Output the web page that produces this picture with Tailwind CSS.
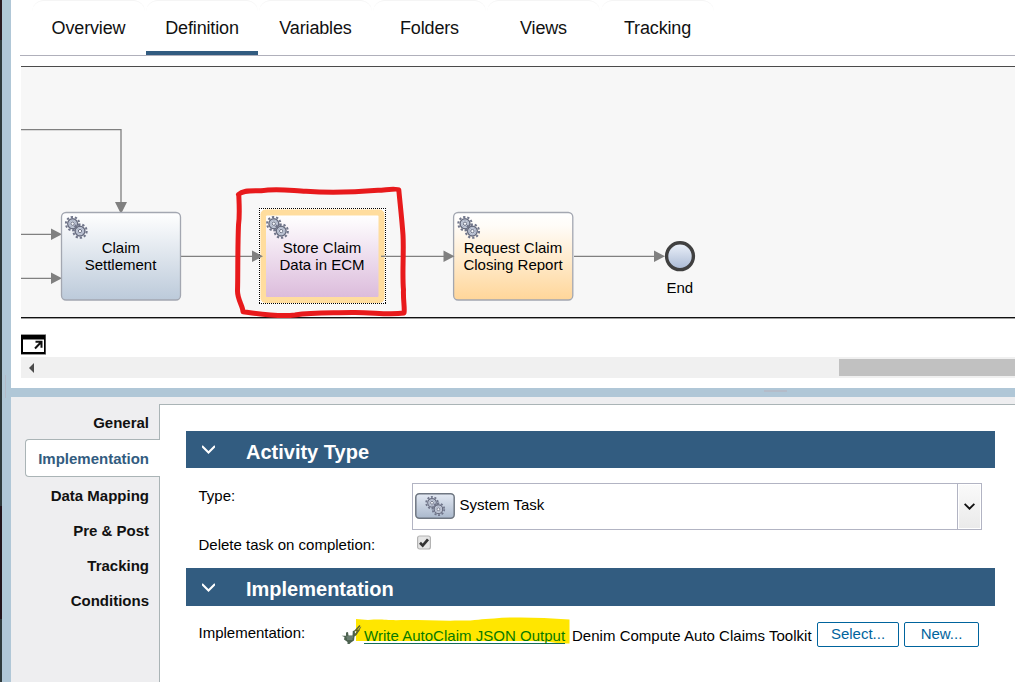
<!DOCTYPE html>
<html lang="en">
<head>
<meta charset="utf-8">
<title>Process Designer</title>
<script src="https://cdn.jsdelivr.net/npm/@tailwindcss/browser@4"></script>
</head>
<body class="flex h-[682px] w-[1015px] overflow-hidden bg-white font-['Liberation_Sans',sans-serif] text-[15px] leading-5 text-black">
<svg class="h-0 w-0 absolute" aria-hidden="true">
  <defs>
    <g id="gear">
      <circle r="6.7" fill="none" stroke="#70758a" stroke-width="2" stroke-dasharray="2.3 1.909"/>
      <circle r="4.900" fill="#d3d9e6" stroke="#686d80" stroke-width="1.400"/>
      <circle r="3.300" fill="none" stroke="#a9b1c4" stroke-width="1"/>
      <circle r="1.700" fill="#f3f5fa" stroke="#6c7184" stroke-width="1"/>
    </g>
    <g id="gears"><use href="#gear"/><use href="#gear" x="7.4" y="7.4"/></g>
    <linearGradient id="blue" x2="0" y2="1"><stop offset="0" stop-color="#fff"/><stop offset="1" stop-color="#bccada"/></linearGradient>
    <linearGradient id="purple" x2="0" y2="1"><stop offset="0" stop-color="#fff"/><stop offset="1" stop-color="#dcbcdc"/></linearGradient>
    <linearGradient id="orange" x2="0" y2="1"><stop offset="0" stop-color="#fff"/><stop offset=".15" stop-color="#fffcf8"/><stop offset="1" stop-color="#ffd699"/></linearGradient>
    <linearGradient id="end" x2="0" y2="1"><stop offset="0" stop-color="#edf2fa"/><stop offset="1" stop-color="#a9b9d4"/></linearGradient>
    <linearGradient id="button" x2="0" y2="1"><stop offset="0" stop-color="#e3e9f3"/><stop offset="1" stop-color="#aab8cc"/></linearGradient>
  </defs>
</svg>

<div class="flex w-[2px] shrink-0 flex-col bg-[#2f3a3c]">
  <div class="h-10 bg-[#2a1a22]"></div>
  <div class="mt-[466px] h-[113px] bg-[#23141b]"></div>
</div>
<div class="flex w-[9px] shrink-0 flex-col bg-[#b0c7d7]"><div class="mt-[375px] ml-[3px] h-[23px] w-px bg-[#b3bac8]"></div></div>

<div class="flex min-w-0 flex-1 flex-col">
  <nav class="ml-[9px] flex h-14 shrink-0 border-b border-[#b0b0bb] pl-[12px] text-[18px] tracking-[-0.15px] text-[#111]">
    <div class="mr-px flex h-[55px] w-[113px] justify-center rounded-t-xl border-t border-[#f5f5f5] pt-[17px]">Overview</div>
    <div class="mr-px flex h-[55px] w-28 flex-col justify-between rounded-t-xl border-t border-[#f5f5f5] pt-[17px] text-center"><span>Definition</span><i class="block h-1 bg-[#325c80]"></i></div>
    <div class="mr-px flex h-[55px] w-[113px] justify-center rounded-t-xl border-t border-[#f5f5f5] pt-[17px]">Variables</div>
    <div class="mr-px flex h-[55px] w-[113px] justify-center rounded-t-xl border-t border-[#f5f5f5] pt-[17px]">Folders</div>
    <div class="mr-px flex h-[55px] w-[113px] justify-center rounded-t-xl border-t border-[#f5f5f5] pt-[17px]">Views</div>
    <div class="flex h-[55px] w-[113px] justify-center rounded-t-xl border-t border-[#f5f5f5] pt-[17px]">Tracking</div>
  </nav>

  <svg class="mt-[10px] ml-[10px] h-[253px] w-[994px] shrink-0" viewBox="21 66 994 253" font-family="Liberation Sans, sans-serif" font-size="15">
    <rect x="21" y="66" width="994" height="252" fill="#f7f7f7"/>
    <rect x="21" y="66" width="994" height="1" fill="#4b4b4b"/>
    <rect x="21" y="317" width="994" height="1.4" fill="#111"/>
    <g fill="none" stroke="#808080" stroke-width="1.3">
      <path d="M21 129.6H121V204M21 234.3H52M21 278.3H52M181 256.3H254M382 256.3H444M574 256.3H655"/>
    </g>
    <g fill="#808080">
      <path d="M115 202h12l-6 12zM51 228.5v11.5l11-5.7zM51 272.500v11.5l11-5.700z"/>
    </g>
    <rect x="61.500" y="212.500" width="119" height="87.500" rx="4.500" fill="url(#blue)" stroke="#a3a7b1" stroke-width="1.300"/>
    <rect x="453.600" y="212.500" width="119.200" height="87.500" rx="4.500" fill="url(#orange)" stroke="#a3a7b1" stroke-width="1.300"/>
    <rect x="259" y="208" width="127" height="96" fill="#fff"/>
    <rect x="260.500" y="209.500" width="124" height="93.500" rx="5" fill="#ffdd9e"/>
    <rect x="266" y="215.500" width="112.500" height="81.500" rx="1" fill="url(#purple)"/>
    <path d="M259 208.500H386M259 303.500H386M259.500 208V304M385.500 208V304" fill="none" stroke="#000" stroke-dasharray="1 1"/>
    <path d="M252 250.500v11.500l11-5.700zM443.500 250.500v11.500l11-5.700zM654 250.500v11.500l11-5.700z" fill="#808080"/>
    <path d="M381 256.300H386" stroke="#808080" stroke-width="1.300"/>
    <use href="#gears" x="72.600" y="223.700"/><use href="#gears" x="273.800" y="223.700"/><use href="#gears" x="465" y="223.700"/>
    <g text-anchor="middle">
      <text x="120.800" y="253">Claim</text><text x="120.500" y="270">Settlement</text>
      <text x="322" y="253">Store Claim</text><text x="322" y="270">Data in ECM</text>
      <text x="513" y="253">Request Claim</text><text x="513" y="270">Closing Report</text>
      <text x="679.800" y="293">End</text>
    </g>
    <circle cx="680" cy="256.200" r="13.400" fill="url(#end)" stroke="#404040" stroke-width="3.400"/>
    <path d="M238.500 194.500C243 190 251 191 261 190.800C276 188 290 190.500 306 191.300C332 193 356 192 378 190.300C386 190 397 188 398.800 190C400 203 402 220 403 235C404 252 402 274 403.500 290C403 300 405 309 404 313C388 315.500 372 312 352 312.500C326 313 312 312 295 315C277 317 261 314 243 311.800C243 306 237.500 300 237.500 291C238 277 237.500 250 238.500 225C240 214 239 202 238.800 195" fill="none" stroke="#e81a1c" stroke-width="5" stroke-linecap="round" stroke-linejoin="round"/>
  </svg>

  <svg class="mt-[15px] ml-[10px] h-[21px] w-[25px] shrink-0" viewBox="0 0 25 21">
    <rect width="25" height="21" fill="#999"/><rect y="1" width="24.500" height="19" fill="#000"/><rect x="2" y="5.500" width="21" height="12.500" fill="#fff"/><path d="M14.500 7.800h6v6M20 8.300L14 14.500" fill="none" stroke="#111" stroke-width="2"/>
  </svg>
  <div class="mt-[2px] ml-[10px] flex h-[21px] shrink-0 items-center justify-between bg-[#f0f0f0]">
    <svg class="ml-2 h-[10px] w-[5px]" viewBox="0 0 5 10"><path d="M5 0v10L0 5z" fill="#4b4b4b"/></svg>
    <div class="h-[17px] w-44 bg-[#c1c1c1]"></div>
  </div>
  <div class="mt-[10px] h-[9px] shrink-0 bg-[#b0c7d7] pt-[2px] pl-[753px]"><div class="h-[2px] w-[23px] bg-[#b4bcc9]"></div></div>

  <div class="flex flex-1 bg-[#eeeef0] pt-[7px]">
    <aside class="flex w-[149px] shrink-0 flex-col text-right font-bold text-[#111]">
      <div class="h-[35px] border-r border-[#aab4b6] pt-[9px] pr-[10px]">General</div>
      <div class="ml-[14px] h-[38px] rounded-l-sm border border-r-0 border-[#aab4b6] bg-white pt-[9px] pr-[11px] text-[#325c80]">Implementation</div>
      <div class="flex flex-1 flex-col gap-[15px] border-r border-[#aab4b6] pt-[9px] pr-[10px]">
        <div>Data Mapping</div><div>Pre &amp; Post</div><div>Tracking</div><div>Conditions</div>
      </div>
    </aside>
    <main class="flex-1 border-t border-[#aab4b6] bg-white pt-[26px] pr-5 pl-[26px]">
      <h2 class="flex h-[37px] items-center bg-[#325c80] pl-4 text-[20px] font-bold text-white">
        <svg class="mr-[31px] h-[9px] w-[13px] -mt-px" viewBox="0 0 13 9"><path d="M0 1l6.500 6.500L13 1" fill="none" stroke="#fff" stroke-width="2"/></svg><span class="pt-[5px]">Activity Type</span>
      </h2>
      <div class="flex h-[62px] pt-[15px] pl-[12.500px]">
        <div class="w-[213.500px] pt-[3px]">Type:</div>
        <div class="flex h-[47px] w-[570px] border border-[#b2b4c3]">
          <svg class="mt-[9px] ml-[2px] h-[26px] w-[40px]" viewBox="0 0 40 26"><rect x=".8" y=".8" width="38.400" height="24.400" rx="3.500" fill="url(#button)" stroke="#6f7782" stroke-width="1.500"/><use href="#gears" transform="translate(17 9.800) scale(.87)"/></svg>
          <span class="mt-[11px] ml-[4.500px]">System Task</span>
          <div class="ml-auto flex w-6 items-center justify-center border-l border-[#b2b4c3] bg-linear-to-b from-[#fafafa] to-[#eaeaea] pr-px pb-px shadow-[inset_0_0_0_1px_#fff]"><svg class="h-[7px] w-[11px]" viewBox="0 0 11 7"><path d="M.6 .8l4.900 4.900L10.400.8" fill="none" stroke="#111" stroke-width="1.900"/></svg></div>
        </div>
      </div>
      <div class="flex h-[38px] pt-[5px] pl-[12.500px]">
        <div class="w-[218.500px]">Delete task on completion:</div>
        <svg class="h-[15px] w-[14px]" viewBox="0 0 14 15"><rect x=".6" y="1" width="12.800" height="13" rx="2" fill="#e5e5e5" stroke="#b3b3b3" stroke-width="1.200"/><path d="M3 7.800l2.700 2.800L11 4.300" fill="none" stroke="#333" stroke-width="2.700"/></svg>
      </div>
      <h2 class="flex h-[38px] items-center bg-[#325c80] pl-4 text-[20px] font-bold text-white">
        <svg class="mr-[31px] h-[9px] w-[13px]" viewBox="0 0 13 9"><path d="M0 1l6.500 6.500L13 1" fill="none" stroke="#fff" stroke-width="2"/></svg><span class="pt-[4px]">Implementation</span>
      </h2>
      <div class="flex pt-[11px] pl-[12.500px]">
        <div class="w-[142.500px] pt-[6px]">Implementation:</div>
        <div class="relative flex w-[231px] pt-[9px]">
          <svg class="absolute top-0 left-[15px] h-[27px] w-[214px]" viewBox="0 0 214 27"><path d="M0 2L12 3C25 2 28 3 40 3.200C60 2.600 80 4 103 3.600C120 3.700 125 1.800 138 1.400C158-.3 184 .2 213.500 2.500V26.500H204L190 24.500 177 24 170 24H0z" fill="#ffe600"/></svg>
          <svg class="absolute top-[7px] left-0 h-[21px] w-[22px]" viewBox="0 0 22 21"><path d="M.6 11.800H5V8.500L7 8l.5 3.500h4L11.800 7l2-.5.2 4L19 3.500l1.500-1L15.500 11l-2 1.500-.5 4L10 18.500 8.500 20H6.500V18L3 15.500 3.500 13z" fill="#4d6250"/><path d="M19 1.500L14.500 6.500H17.500L14 11" fill="none" stroke="#62662c" stroke-width="1.600"/><path d="M5.500 13h6.500M6 15h5.500" stroke="#879a90" stroke-width="1"/></svg>
          <span class="relative ml-[23px] h-[18px] border-b border-[#126b55] tracking-[0.02px] text-[#087a00]">Write AutoClaim JSON Output</span>
        </div>
        <span class="pt-[9px] whitespace-nowrap tracking-[0.02px]">Denim Compute Auto Claims Toolkit</span>
        <div class="ml-auto mr-4 mt-[5px] flex shrink-0 gap-[5px] text-[#00649d]">
          <div class="h-[25px] w-[82px] rounded-[2px] border border-[#00649d] pt-px text-center">Select...</div>
          <div class="h-[25px] w-[75px] rounded-[2px] border border-[#00649d] pt-px text-center">New...</div>
        </div>
      </div>
    </main>
  </div>
</div>
</body>
</html>
